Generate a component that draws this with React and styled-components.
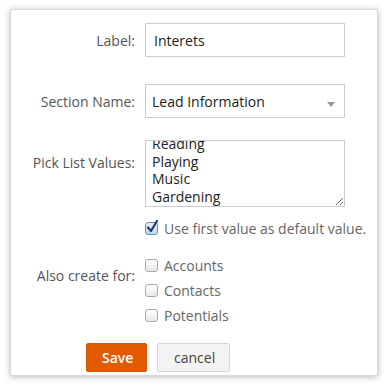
import React, { useEffect, useRef } from 'react';
import styled, { createGlobalStyle } from 'styled-components';

const GlobalStyle = createGlobalStyle`
    html, body {
        margin: 0;
        padding: 0;
        background: #ffffff;
    }
    body {
        font-family: "Open Sans", "Liberation Sans", sans-serif;
    }
`;

const Page = styled.div`
    padding: 9px 10px;
    width: 388px;
    height: 387px;
    box-sizing: border-box;
`;

const Card = styled.div`
    width: 368px;
    height: 367px;
    box-sizing: border-box;
    background: #fff;
    border: 1px solid #d8d8d8;
    box-shadow: 0 1px 6px rgba(0, 0, 0, 0.28);
    padding-top: 13px;
`;

const Row = styled.div`
    display: flex;
    align-items: ${p => p.$align || 'center'};
    margin-top: ${p => p.$top || 0}px;
`;

const Label = styled.div`
    width: 124px;
    padding-right: 10px;
    padding-top: ${p => p.$pad || 0}px;
    text-align: right;
    font-size: 14px;
    color: #555;
    flex-shrink: 0;
`;

const TextInput = styled.input`
    width: 200px;
    height: 34px;
    box-sizing: border-box;
    border: 1px solid #cccccc;
    padding: 0 8px;
    font-family: "Open Sans", "Liberation Sans", sans-serif;
    font-size: 14px;
    color: #222;
    outline: none;
`;

const SelectBox = styled.div`
    width: 200px;
    height: 34px;
    box-sizing: border-box;
    border: 1px solid #cccccc;
    padding: 0 9px 0 6px;
    display: flex;
    align-items: center;
    justify-content: space-between;
    font-size: 14px;
    color: #222;
`;

const Caret = styled.span`
    width: 0;
    height: 0;
    margin-top: 6px;
    border-left: 4px solid transparent;
    border-right: 4px solid transparent;
    border-top: 5px solid #999;
`;

const Area = styled.textarea`
    width: 200px;
    height: 67px;
    box-sizing: border-box;
    border: 1px solid #cccccc;
    padding: 3px 6px 0;
    font-family: "Open Sans", "Liberation Sans", sans-serif;
    font-size: 14px;
    line-height: 17.4px;
    color: #222;
    resize: both;
    outline: none;
    overflow: hidden;
`;

const CheckLine = styled.label`
    display: flex;
    align-items: center;
    gap: 6px;
    font-size: 14px;
    color: #666;
    height: ${p => p.$h || 25}px;
`;

const Box = styled.span`
    width: 11px;
    height: 11px;
    border: 1px solid ${p => (p.$checked ? '#6a8fb8' : '#a9a9a9')};
    border-radius: 3px;
    background: ${p => (p.$checked ? 'linear-gradient(#e8f0fb, #c3d6ee)' : 'linear-gradient(#ffffff, #e9e9e9)')};
    position: relative;
    flex-shrink: 0;
`;

const Tick = styled.svg`
    position: absolute;
    left: 0px;
    top: -4px;
`;

const CheckList = styled.div`
    display: flex;
    flex-direction: column;
`;

const Buttons = styled.div`
    display: flex;
    gap: 10px;
    padding-left: 75px;
    margin-top: 15px;
`;

const Button = styled.button`
    height: 29px;
    box-sizing: border-box;
    padding: 0 ${p => (p.$primary ? 15 : 16)}px;
    border: 1px solid ${p => (p.$primary ? '#d45400' : '#d6d6d6')};
    background: ${p => (p.$primary ? '#e25b00' : '#f3f3f3')};
    color: ${p => (p.$primary ? '#fff' : '#444')};
    font-family: "Open Sans", "Liberation Sans", sans-serif;
    font-size: 14px;
    font-weight: ${p => (p.$primary ? 600 : 400)};
    border-radius: 2px;
    width: ${p => p.$w}px;
`;

const Check = ({ checked, children, h }) => (
    <CheckLine $h={h}>
        <Box $checked={checked}>
            {checked && (
                <Tick width="13" height="15" viewBox="0 0 13 15">
                    <path d="M2 8.5 L5 12 L11 2" fill="none" stroke="#1f3f73" strokeWidth="2.2" strokeLinecap="round" strokeLinejoin="round" />
                </Tick>
            )}
        </Box>
        {children}
    </CheckLine>
);

const App = () => {
    const areaRef = useRef(null);

    useEffect(() => {
        if (areaRef.current) areaRef.current.scrollTop = areaRef.current.scrollHeight;
    }, []);

    return (
        <Page>
            <GlobalStyle />
            <Card>
                <Row>
                    <Label>Label:</Label>
                    <TextInput defaultValue="Interets" />
                </Row>
                <Row $top={27}>
                    <Label>Section Name:</Label>
                    <SelectBox>
                        Lead Information
                        <Caret />
                    </SelectBox>
                </Row>
                <Row $top={22} $align="flex-start">
                    <Label $pad={13}>Pick List Values:</Label>
                    <Area
                        ref={areaRef}
                        defaultValue={'Travelling\nReading\nPlaying\nMusic\nGardening'}
                    />
                </Row>
                <Row $top={9}>
                    <Label />
                    <Check checked h={24}>Use first value as default value.</Check>
                </Row>
                <Row $top={13} $align="flex-start">
                    <Label $pad={13}>Also create for:</Label>
                    <CheckList>
                        <Check>Accounts</Check>
                        <Check>Contacts</Check>
                        <Check>Potentials</Check>
                    </CheckList>
                </Row>
                <Buttons>
                    <Button $primary $w={61}>Save</Button>
                    <Button $w={73}>cancel</Button>
                </Buttons>
            </Card>
        </Page>
    );
};

export default App;
